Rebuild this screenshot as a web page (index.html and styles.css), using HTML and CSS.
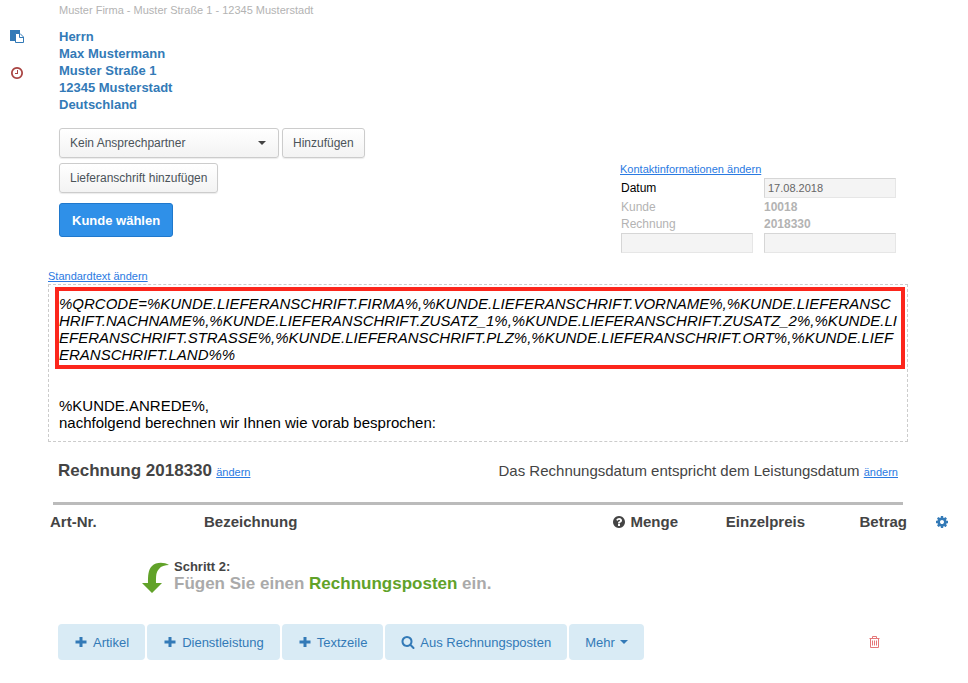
FILE: index.html
```html
<!DOCTYPE html>
<html lang="de">
<head>
  <meta charset="UTF-8">
  <meta name="viewport" content="width=device-width, initial-scale=1.0">
  <title>Rechnung 2018330</title>
  <link rel="stylesheet" href="styles.css">
</head>
<body>
  <div class="page">
    <aside class="tools">
      <button type="button" class="icon-btn" aria-label="Kopieren">
        <svg class="icon" viewBox="0 0 14 14"><path d="M0 1H10V5H5V12H0Z"/><path class="sheet" d="M5.500 4.500H10L13.500 8V13.500H5.500ZM9.500 4.500V8.500H13.500"/></svg>
      </button>
      <button type="button" class="icon-btn history" aria-label="Verlauf">
        <svg class="icon" viewBox="0 0 1792 1792"><path d="M1024 544v448q0 14-9 23t-23 9h-320q-14 0-23-9t-9-23v-64q0-14 9-23t23-9h224v-352q0-14 9-23t23-9h64q14 0 23 9t9 23zm416 352q0-148-73-273t-198-198-273-73-273 73-198 198-73 273 73 273 198 198 273 73 273-73 198-198 73-273zm224 0q0 209-103 385.500t-279.500 279.500-385.500 103-385.500-103-279.500-279.500-103-385.500 103-385.500 279.500-279.500 385.500-103 385.500 103 279.500 279.500 103 385.500z"/></svg>
      </button>
    </aside>

    <main>
      <!-- Customer address and contact info -->
      <section class="customer">
        <div class="recipient">
          <p class="sender">Muster Firma - Muster Straße 1 - 12345 Musterstadt</p>
          <address>
            Herrn<br>
            Max Mustermann<br>
            Muster Straße 1<br>
            12345 Musterstadt<br>
            Deutschland
          </address>
          <div class="contact-row">
            <div class="select-wrap">
              <select class="btn" aria-label="Ansprechpartner">
                <option>Kein Ansprechpartner</option>
              </select>
              <span class="caret"></span>
            </div>
            <button type="button" class="btn">Hinzufügen</button>
          </div>
          <button type="button" class="btn">Lieferanschrift hinzufügen</button>
          <button type="button" class="btn-primary">Kunde wählen</button>
        </div>

        <div class="info">
          <a href="#" class="edit">Kontaktinformationen ändern</a>
          <div class="info-grid">
            <label for="datum">Datum</label>
            <input type="text" id="datum" value="17.08.2018">
            <span class="muted">Kunde</span>
            <strong class="muted">10018</strong>
            <span class="muted">Rechnung</span>
            <strong class="muted">2018330</strong>
            <input type="text" aria-label="Bezeichnung">
            <input type="text" aria-label="Wert">
          </div>
        </div>
      </section>

      <!-- Intro text -->
      <section class="intro">
        <a href="#" class="edit">Standardtext ändern</a>
        <div class="text-box">
          <p class="qrcode">%QRCODE=%KUNDE.LIEFERANSCHRIFT.FIRMA%,%KUNDE.LIEFERANSCHRIFT.VORNAME%,%KUNDE.LIEFERANSCHRIFT.NACHNAME%,%KUNDE.LIEFERANSCHRIFT.ZUSATZ_1%,%KUNDE.LIEFERANSCHRIFT.ZUSATZ_2%,%KUNDE.LIEFERANSCHRIFT.STRASSE%,%KUNDE.LIEFERANSCHRIFT.PLZ%,%KUNDE.LIEFERANSCHRIFT.ORT%,%KUNDE.LIEFERANSCHRIFT.LAND%%</p>
          <p class="salutation">%KUNDE.ANREDE%,<br>nachfolgend berechnen wir Ihnen wie vorab besprochen:</p>
        </div>
      </section>

      <section class="title-row">
        <div><h1>Rechnung 2018330</h1> <a href="#" class="edit">ändern</a></div>
        <div>Das Rechnungsdatum entspricht dem Leistungsdatum <a href="#" class="edit">ändern</a></div>
      </section>

      <!-- Invoice items -->
      <section class="items">
        <div class="items-main">
          <hr>
          <table>
            <thead>
              <tr>
                <th class="col-nr">Art-Nr.</th>
                <th class="col-name">Bezeichnung</th>
                <th class="col-amount">
                  <svg class="icon" viewBox="0 0 1792 1792"><path d="M1024 1376v-192q0-14-9-23t-23-9h-192q-14 0-23 9t-9 23v192q0 14 9 23t23 9h192q14 0 23-9t9-23zm256-672q0-88-55.500-163t-138.500-116-170-41q-243 0-371 213-15 24 8 42l132 100q7 6 19 6 16 0 25-12 53-68 86-92 34-24 86-24 48 0 85.500 26t37.500 59q0 38-20 61t-68 45q-63 28-115.500 86.500t-52.500 125.500v36q0 14 9 23t23 9h192q14 0 23-9t9-23q0-19 21.500-49.500t54.500-49.500q32-18 49-28.500t46-35 44.500-48 28-60.500 12.500-81zm384 192q0 209-103 385.500t-279.500 279.500-385.500 103-385.500-103-279.500-279.500-103-385.500 103-385.500 279.500-279.500 385.500-103 385.500 103 279.500 279.500 103 385.500z"/></svg>
                  Menge
                </th>
                <th class="col-price">Einzelpreis</th>
                <th class="col-total">Betrag</th>
              </tr>
            </thead>
          </table>
        </div>
        <button type="button" class="icon-btn settings" aria-label="Einstellungen">
          <svg class="icon" viewBox="0 0 1792 1792"><path d="M1152 896q0-106-75-181t-181-75-181 75-75 181 75 181 181 75 181-75 75-181zm512-109v222q0 12-8 23t-20 13l-185 28q-19 54-39 91 35 50 107 138 10 12 10 25t-9 23q-27 37-99 108t-94 71q-12 0-26-9l-138-108q-44 23-91 38-16 136-29 186-7 28-36 28h-222q-14 0-24.500-8.500t-11.500-21.500l-28-184q-49-16-90-37l-141 107q-10 9-25 9-14 0-25-11-126-114-165-168-7-10-7-23 0-12 8-23 15-21 51-66.500t54-70.500q-27-50-41-99l-183-27q-13-2-21-12.500t-8-23.500v-222q0-12 8-23t19-13l186-28q14-46 39-92-40-57-107-138-10-12-10-24 0-10 9-23 26-36 98.500-107.500t94.500-71.500q13 0 26 10l138 107q44-23 91-38 16-136 29-186 7-28 36-28h222q14 0 24.500 8.500t11.500 21.500l28 184q49 16 90 37l142-107q9-9 24-9 13 0 25 10 129 119 165 170 7 8 7 22 0 12-8 23-15 21-51 66.500t-54 70.500q26 50 41 98l183 28q13 2 21 12.500t8 23.500z"/></svg>
        </button>
      </section>

      <section class="step">
        <svg class="arrow" viewBox="0 0 28 32"><path d="M27 3C22 0 14 0 10 4C6 8 6 14 6 21H0L10 31L20 21H14C14 14 14 10 17 7C19 4 23 3 27 3Z"/></svg>
        <div>
          <h3>Schritt 2:</h3>
          <p>Fügen Sie einen <em>Rechnungsposten</em> ein.</p>
        </div>
      </section>

      <section class="actions">
        <div class="btn-group">
          <button type="button" class="btn-light">
            <svg class="icon" viewBox="0 0 14 14"><path d="M5.500 2h3v3.500h4v3h-4v3.500h-3v-3.500h-4v-3h4z"/></svg>
            Artikel
          </button>
          <button type="button" class="btn-light">
            <svg class="icon" viewBox="0 0 14 14"><path d="M5.500 2h3v3.500h4v3h-4v3.500h-3v-3.500h-4v-3h4z"/></svg>
            Dienstleistung
          </button>
          <button type="button" class="btn-light">
            <svg class="icon" viewBox="0 0 14 14"><path d="M5.500 2h3v3.500h4v3h-4v3.500h-3v-3.500h-4v-3h4z"/></svg>
            Textzeile
          </button>
          <button type="button" class="btn-light">
            <svg class="icon" viewBox="0 0 1792 1792"><path d="M1216 832q0-185-131.500-316.500t-316.500-131.500-316.500 131.500-131.500 316.500 131.500 316.500 316.500 131.500 316.500-131.500 131.500-316.500zm512 832q0 52-38 90t-90 38q-54 0-90-38l-343-342q-179 124-399 124-143 0-273.500-55.500t-225-150-150-225-55.500-273.500 55.500-273.500 150-225 225-150 273.500-55.500 273.500 55.500 225 150 150 225 55.500 273.500q0 220-124 399l343 343q37 37 37 90z"/></svg>
            Aus Rechnungsposten
          </button>
          <button type="button" class="btn-light">Mehr <span class="caret"></span></button>
        </div>
        <button type="button" class="icon-btn delete" aria-label="Löschen">
          <svg class="trash" viewBox="0 0 11 12"><path d="M0.500 2.500h10M3.500 2.500v-2h4v2M1.500 2.500v9h8v-9M3.500 4.500v5M5.500 4.500v5M7.500 4.500v5"/></svg>
        </button>
      </section>
    </main>
  </div>
</body>
</html>
```

FILE: styles.css
```css
* {
  box-sizing: border-box;
}
body {
  margin: 0;
  background: white;
  color: #444;
  font-family: "Helvetica Neue", "Liberation Sans", Arial, sans-serif;
  font-size: 13px;
  line-height: 17px;
}
p, h1, h3 {
  margin: 0;
}
button, input, select {
  font-family: inherit;
  font-size: 13px;
}
.page {
  display: flex;
}
.tools {
  display: flex;
  flex-direction: column;
  align-items: center;
  gap: 23px;
  width: 34px;
  margin-right: 14px;
  padding-top: 29px;
}
main {
  flex: 1;
}
.icon {
  width: 14px;
  height: 14px;
  fill: currentColor;
  flex: none;
}
.sheet {
  fill: white;
  stroke: currentColor;
}
.icon-btn {
  display: flex;
  padding: 0;
  border: none;
  background: none;
  color: #337ab7;
  cursor: pointer;
}
.history {
  color: #a94442;
}
.edit {
  color: #2a7ae2;
  font-size: 11px;
}
.customer, .intro, .title-row {
  margin-right: 60px;
}

/* customer */
.customer {
  display: flex;
  justify-content: space-between;
  align-items: flex-end;
  padding: 2px 12px 0 11px;
}
.recipient {
  display: flex;
  flex-direction: column;
  align-items: flex-start;
  padding-bottom: 17px;
}
.sender {
  color: #b3b3b3;
  font-size: 11px;
}
address {
  margin: 9px 0 15px;
  color: #337ab7;
  font-style: normal;
  font-weight: bold;
}
.contact-row {
  display: flex;
  gap: 3px;
  margin-bottom: 5px;
}
.btn {
  height: 30px;
  padding: 0 10px;
  border: 1px solid #ccc;
  border-radius: 3px;
  background: linear-gradient(#fff, #f3f3f3);
  box-shadow: 0 1px 1px rgba(0, 0, 0, 0.08);
  color: #4b5359;
  font-size: 12px;
}
.select-wrap {
  position: relative;
}
.select-wrap select {
  width: 220px;
  appearance: none;
}
.caret {
  display: inline-block;
  border-top: 4px solid;
  border-left: 4px solid transparent;
  border-right: 4px solid transparent;
}
.select-wrap .caret {
  position: absolute;
  top: 13px;
  right: 13px;
  pointer-events: none;
}
.btn-primary {
  height: 34px;
  margin-top: 10px;
  padding: 0 12px;
  border: 1px solid #1f78cc;
  border-radius: 3px;
  background: #2f90e8;
  color: white;
  font-weight: bold;
}
.info-grid {
  display: grid;
  grid-template-columns: 132px 132px;
  column-gap: 11px;
  padding-left: 1px;
}
.info-grid label {
  color: #000;
  font-size: 12px;
  line-height: 20px;
}
.info-grid input {
  width: 100%;
  height: 20px;
  margin-bottom: 1px;
  padding: 0 3px;
  border: 1px solid #e6e6e6;
  border-top-color: #d6d6d6;
  border-left-color: #d6d6d6;
  background: #f4f4f4;
  color: #666;
  font-size: 11px;
}
.muted {
  color: #b3b3b3;
  font-size: 12px;
}

/* intro text */
.intro {
  padding-top: 14px;
}
.intro .edit {
  display: block;
  line-height: 16px;
}
.text-box {
  padding: 2px 2px 10px 6px;
  border: 1px dashed #ccc;
  color: #000;
  font-size: 15px;
}
.qrcode {
  padding: 4px 0 2px;
  border: 4px solid #fc261c;
  font-style: italic;
  word-break: break-all;
}
.salutation {
  padding: 28px 4px 0;
}

.title-row {
  display: flex;
  justify-content: space-between;
  align-items: baseline;
  padding: 20px 10px 0;
  font-size: 15px;
}
.title-row h1 {
  display: inline;
  font-size: 17px;
}

/* items */
.items {
  display: flex;
  align-items: flex-end;
  padding-top: 21px;
}
.items-main {
  flex: 1;
}
hr {
  height: 3px;
  margin: 0 5px 8px;
  border: none;
  background: #bbb;
}
table {
  width: 100%;
  table-layout: fixed;
  border-collapse: collapse;
  font-size: 15px;
}
th {
  padding: 0 1px 0 2px;
  text-align: left;
}
.col-nr {
  width: 154px;
}
.col-amount, .col-price, .col-total {
  text-align: right;
}
.col-amount {
  width: 120px;
}
.col-amount .icon {
  vertical-align: -2px;
}
.col-price {
  width: 127px;
}
.col-total {
  width: 102px;
}
.settings {
  width: 60px;
  padding: 0 0 1px 27px;
}
.step {
  display: flex;
  gap: 4px;
  margin: 28px 0 30px 94px;
}
.arrow {
  width: 28px;
  height: 32px;
  margin-top: 4px;
  fill: #61a229;
}
.step h3 {
  font-size: 13px;
}
.step p {
  color: #aaa;
  font-size: 17px;
  font-weight: bold;
}
.step em {
  color: #61a229;
  font-style: normal;
}

.actions {
  display: flex;
  justify-content: space-between;
  align-items: center;
  margin: 0 88px 20px 10px;
}
.btn-group {
  display: flex;
  gap: 2px;
}
.btn-light {
  display: flex;
  align-items: center;
  gap: 5px;
  height: 36px;
  padding: 0 16px;
  border: none;
  border-radius: 4px;
  background: #d9ebf5;
  color: #337ab7;
}
.trash {
  width: 11px;
  height: 12px;
  fill: none;
  stroke: #e57779;
}
```
